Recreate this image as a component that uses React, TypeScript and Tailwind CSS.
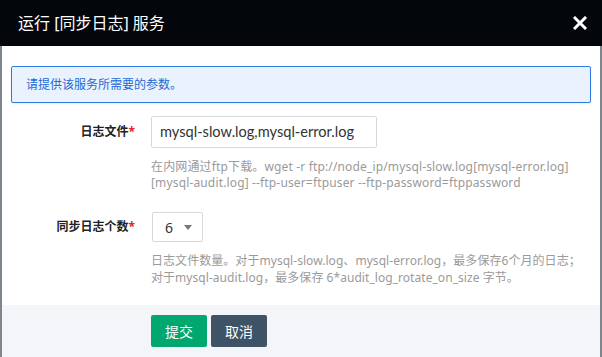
import React from "react";

const font = "font-['Noto_Sans','Noto_Sans_CJK_SC',sans-serif]";

const Label: React.FC<{ text: string }> = ({ text }) => (
  <div className="w-[124px] shrink-0 text-right text-[12px] font-bold text-[#222]">
    {text}
    <span className="text-[#e02424]">*</span>
  </div>
);

const App: React.FC = () => {
  return (
    <div className={`h-[357px] w-[602px] bg-[#7e858d] px-[2px] ${font}`}>
      <div className="flex h-full flex-col bg-white">
        {/* Header */}
        <div className="-mx-[2px] flex h-[46px] shrink-0 items-center justify-between bg-[#03070b] pl-[18px] pr-[15px]">
          <h1 className="text-[16px] text-white">运行 [同步日志] 服务</h1>
          <svg width="14" height="14" viewBox="0 0 14 14" className="text-white">
            <path d="M2 2 L12 12 M12 2 L2 12" stroke="currentColor" strokeWidth="3" strokeLinecap="square" />
          </svg>
        </div>

        {/* Body */}
        <div className="flex-1 px-[9px] pt-[20px]">
          <div className="flex h-[37px] items-center rounded-[2px] border border-[#2f7be5] bg-[#e9f2fd] px-[14px] text-[12px] text-[#1d6ad6] shadow-[0_1px_2px_rgba(0,0,0,0.08)]">
            请提供该服务所需要的参数。
          </div>

          <div className="mt-[13px] flex items-center">
            <Label text="日志文件" />
            <div className="ml-[16px] flex h-[32px] w-[226px] items-center whitespace-nowrap rounded-[2px] border border-[#d5d8dd] px-[8px] font-['Lato',sans-serif] text-[14.6px] text-[#333]">
              mysql-slow.log,mysql-error.log
            </div>
          </div>
          <div className="ml-[140px] mt-[11px] text-[12px] leading-[16px] tracking-[0.15px] text-[#9a9a9a]">
            <p>在内网通过ftp下载。wget -r ftp://node_ip/mysql-slow.log[mysql-error.log]</p>
            <p>[mysql-audit.log] --ftp-user=ftpuser --ftp-password=ftppassword</p>
          </div>

          <div className="mt-[21px] flex items-center">
            <Label text="同步日志个数" />
            <div className="ml-[17px] flex h-[30px] w-[51px] items-center justify-between rounded-[2px] border border-[#d5d8dd] pl-[12px] pr-[10px] text-[14px] text-[#333]">
              <span>6</span>
              <svg width="8" height="5" viewBox="0 0 8 5">
                <path d="M0 0 H8 L4 5 Z" fill="#777" />
              </svg>
            </div>
          </div>
          <div className="ml-[140px] mt-[10px] text-[12px] leading-[17px] tracking-[0.05px] text-[#9a9a9a]">
            <p>日志文件数量。对于mysql-slow.log、mysql-error.log，最多保存6个月的日志；</p>
            <p>对于mysql-audit.log，最多保存 6*audit_log_rotate_on_size 字节。</p>
          </div>
        </div>

        {/* Footer */}
        <div className="flex h-[52px] shrink-0 items-center gap-[4px] bg-[#f4f5f9] pl-[149px]">
          <button className="h-[32px] w-[56px] rounded-[2px] bg-[#00a870] text-[14px] text-white">提交</button>
          <button className="h-[32px] w-[56px] rounded-[2px] bg-[#3e5366] text-[14px] text-white">取消</button>
        </div>
      </div>
    </div>
  );
};

export default App;
